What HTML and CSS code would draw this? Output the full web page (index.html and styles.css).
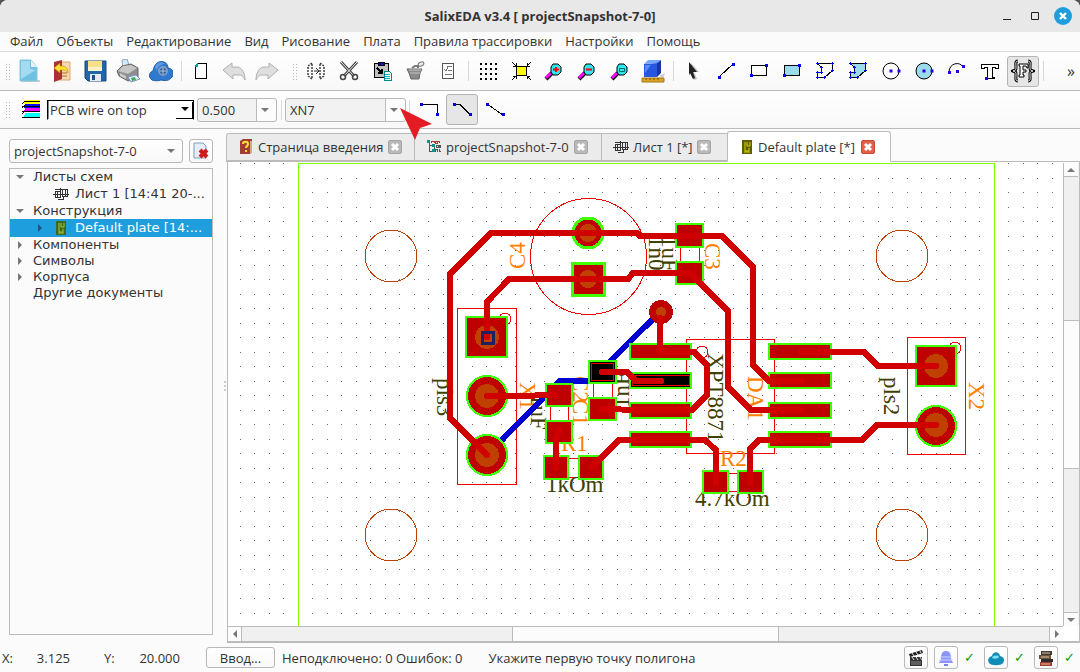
FILE: index.html
```html
<!DOCTYPE html>
<html lang="ru">
<head>
    <meta charset="UTF-8">
    <meta name="viewport" content="width=device-width, initial-scale=1.0">
    <title>SalixEDA v3.4</title>
    <link rel="stylesheet" href="styles.css">
</head>
<body>
<!-- shared symbols -->
<svg class="defs" width="0" height="0" aria-hidden="true">
    <symbol id="sheet" viewBox="0 0 16 14">
        <path d="M0 7.500h16M2.500 4.500h5v6h-5zM9.500 2.500h5v7h-5zM4.500 4v7M12.500 3v7M7.500 1v3M5 12.500h5.500V10M2 2.500h7" fill="none" stroke="#333" shape-rendering="crispEdges"/>
    </symbol>
    <symbol id="zoomglass" viewBox="0 0 24 24">
        <path d="M10 14l-6 6" stroke="#000" stroke-width="4"/>
        <path d="M9 14l-5 5" stroke="#f0f" stroke-width="3"/>
        <path d="M11 5h5l3 3v5l-3 3h-5l-2-3V8z" fill="#2ee6ee" stroke="#000"/>
    </symbol>
    <symbol id="x" viewBox="0 0 14 14">
        <path d="M4 4l6 6M10 4l-6 6" stroke="#fff" stroke-width="3"/>
    </symbol>
</svg>

<div class="app">
    <header class="titlebar">
        <span class="title">SalixEDA v3.4 [ projectSnapshot-7-0]</span>
        <div class="window-buttons">
            <button aria-label="Minimize"><svg width="10" height="10"><path d="M1 8.500h8" stroke="#222"/></svg></button>
            <button aria-label="Maximize"><svg width="10" height="10"><path d="M1.500 1.500h7v7h-7z" fill="none" stroke="#222"/></svg></button>
            <button class="close" aria-label="Close"><svg width="18" height="18"><path d="M6 6l6 6M12 6l-6 6" stroke="#fff" stroke-width="2.400"/></svg></button>
        </div>
    </header>

    <nav class="menubar">
        <button>Файл</button>
        <button>Объекты</button>
        <button>Редактирование</button>
        <button>Вид</button>
        <button>Рисование</button>
        <button>Плата</button>
        <button>Правила трассировки</button>
        <button>Настройки</button>
        <button>Помощь</button>
    </nav>

    <div class="toolbar">
        <span class="grip"></span>
        <button aria-label="New"><svg viewBox="0 0 24 24"><path d="M5 21h18v2H5z" fill="#ccc"/><path d="M3 1h11l6 7v14H3z" fill="#6fc0e2" stroke="#8ac6df"/><path d="M4 2h9v8l6 1-15 9z" fill="#a5dbef"/><path d="M14 1v7h6z" fill="#e4f5fb"/></svg></button>
        <button aria-label="Open"><svg viewBox="0 0 24 24"><path d="M8 3h12v18H8z" fill="#f6d9b0" stroke="#d9a873"/><path d="M11 14h6M11 17h6" stroke="#d8a060" stroke-width="2"/><path d="M4 3l8-2v19l-8 3z" fill="#a83232"/><path d="M4 9l6-5v3c5 0 8 1 8 7-2-3-4-3-8-3v3z" fill="#ffe02e" stroke="#b98a10" stroke-width=".6"/></svg></button>
        <button aria-label="Save"><svg viewBox="0 0 24 24"><path d="M2 2h21v20H5l-3-3z" fill="#2465a6" stroke="#17497c"/><path d="M5 2h14v10H5z" fill="#fbe08a"/><path d="M5 8h14v4H5z" fill="#fff2c4"/><path d="M7 15h11v7H7z" fill="#e6eaee"/><path d="M9 16h3v5H9z" fill="#23507e"/></svg></button>
        <button aria-label="Print"><svg viewBox="0 0 24 24"><path d="M6 1l5-1 3 9-7 3z" fill="#d4e8f8" stroke="#8fa8bd"/><path d="M1 12l5-5 9-2 7 4v9l-10 4-9-5z" fill="#8e8e8e" stroke="#666"/><path d="M2 12l5-5 8-1 6 3-9 6z" fill="#c6c6c6"/><path d="M4 14l6 3v3l-6-3z" fill="#ccc"/><path d="M12 18l8-2 4 4-9 3z" fill="#e8eef8" stroke="#7996c8"/><path d="M15 19l4-1 1 3-4 1z" fill="#3eae55"/></svg></button>
        <button aria-label="Cloud"><svg viewBox="0 0 24 24"><path d="M3 21c-4-3-3-8 1-9C5 5 10 1 15 3c3 1 4 4 4 6 6 1 6 6 4 9-3 4-7 4-11 3-3 1-6 1-9 0z" fill="#2f79cf" stroke="#1d5ca8"/><path d="M6 8c2-5 7-6 10-3-4 0-7 2-8 7z" fill="#5d9ce4"/><circle cx="14" cy="12" r="4" fill="#285a9b" stroke="#7d9cc4" stroke-width="2"/><path d="M14 9v6M11 12h6" stroke="#b4c6da"/></svg></button>
        <span class="sep"></span>
        <button aria-label="Page"><svg viewBox="0 0 24 24" class="crisp"><path d="M9.500 4.500h8v15h-11v-12z" fill="#fff" stroke="#000"/><path d="M6 8V6l3-2v4z" fill="#0a9c94"/></svg></button>
        <button aria-label="Undo"><svg viewBox="0 0 24 24"><path d="M1 11l9-7v4h6c4 1 7 6 7 13-2-4-4-5-6-5h-6v4z" fill="#dedede" stroke="#b0b0b0"/></svg></button>
        <button aria-label="Redo"><svg viewBox="0 0 24 24"><path d="M23 11l-9-7v4H8c-4 1-7 6-7 13 2-4 4-5 6-5h6v4z" fill="#dedede" stroke="#b0b0b0"/></svg></button>
        <span class="grip wide"></span>
        <button aria-label="Mirror"><svg viewBox="0 0 24 24"><path d="M8 4L4 7v10l4 3zM16 4l4 3v10l-4 3z" fill="#fff" stroke="#444" stroke-width="1.500" stroke-dasharray="2 1"/><path d="M10 12h5M12 9l3 3-3 3" fill="none" stroke="#333"/></svg></button>
        <button aria-label="Cut"><svg viewBox="0 0 24 24"><path d="M20 3L7 17M4 3l13 14" stroke="#444" stroke-width="3"/><path d="M20 3L7 17M4 3l13 14" stroke="#eee"/><circle cx="6" cy="18" r="2.500" fill="none" stroke="#444" stroke-width="1.500"/><circle cx="18" cy="18" r="2.500" fill="none" stroke="#444" stroke-width="1.500"/></svg></button>
        <button aria-label="Paste"><svg viewBox="0 0 24 24" class="crisp"><path d="M4 4h14v14H4z" fill="#c0c0c0" stroke="#000"/><path d="M8 3h6v3H8z" fill="#11a" stroke="#000"/><path d="M7 9l5 5M12 10v4H8" fill="none" stroke="#000" stroke-width="2"/><path d="M14 12h5l2 2v7h-7z" fill="#fff" stroke="#088"/><path d="M15 15h5M15 17h5M15 19h5" stroke="#0bb"/></svg></button>
        <button aria-label="Trash"><svg viewBox="0 0 24 24"><path d="M4 10h15l-2 4-1 6H8l-2-6z" fill="#8b8b8b" stroke="#666"/><path d="M6 11h12M7 14h10" stroke="#c5c5c5"/><path d="M9 9l3-2h3v2" fill="none" stroke="#777" stroke-width="2"/><ellipse cx="18" cy="5" rx="3" ry="2" fill="#eee" stroke="#777" transform="rotate(-25 18 5)"/></svg></button>
        <button aria-label="Properties"><svg viewBox="0 0 24 24" class="crisp"><path d="M6.500 4.500h11v15h-11z" fill="#fff" stroke="#555"/><path d="M11 7.500h5M12 11.500h4M9 15.500h7" stroke="#777"/><path d="M8 10l2 2 2-4" fill="none" stroke="#777"/></svg></button>
        <span class="sep"></span>
        <button aria-label="Grid"><svg viewBox="0 0 24 24" class="crisp"><path d="M4 5h18M4 10h18M4 15h18M4 20h18" stroke="#000" stroke-width="2" stroke-dasharray="2 3"/></svg></button>
        <button aria-label="Fit"><svg viewBox="0 0 24 24" class="crisp"><path d="M7.500 7.500h10v9h-10z" fill="#ff0" stroke="#000"/><path d="M3 3l4 4M7 4v3H4M22 3l-4 4M18 4v3h3M3 21l4-4M7 20v-3H4M22 21l-4-4M18 20v-3h3" fill="none" stroke="#000"/></svg></button>
        <button aria-label="Zoom in"><svg><use href="#zoomglass"/><path d="M11 10.500h6M14 8v5" stroke="#f00" stroke-width="2"/></svg></button>
        <button aria-label="Zoom out"><svg><use href="#zoomglass"/><path d="M11 10.500h6" stroke="#f00" stroke-width="2"/></svg></button>
        <button aria-label="Zoom window"><svg><use href="#zoomglass"/><path d="M11.500 9.500h5v3h-5z" fill="none" stroke="#066"/></svg></button>
        <button aria-label="3D view"><svg viewBox="0 0 24 24"><path d="M18 17l6-3-2 5z" fill="#ccc"/><path d="M3 5l13-1v14H3z" fill="#2557e0"/><path d="M3 5l4-4h13l-4 3z" fill="#77a6ff"/><path d="M16 4l4-3v13l-4 4z" fill="#1637a5"/><path d="M4 6h6L4 14z" fill="#5c8bf8"/><path d="M1 19h22v4H1z" fill="#d9a229" stroke="#a87812"/><path d="M5 19v2M9 19v2M13 19v2M17 19v2" stroke="#7c5609"/></svg></button>
        <span class="sep"></span>
        <button aria-label="Select"><svg viewBox="0 0 24 24"><path d="M10 4l8 9h-5l3 7-3 1-3-7-2 3z" fill="#888" opacity=".5"/><path d="M8 3l8 10h-4l2 6-2 1-3-6-1 2z" fill="#222"/></svg></button>
        <button aria-label="Line"><svg viewBox="0 0 24 24" class="crisp"><path d="M5 18L19 5" stroke="#000"/><path d="M4 17h3v3H4zM18 4h3v3h-3z" fill="#00f"/></svg></button>
        <button aria-label="Rectangle"><svg viewBox="0 0 24 24" class="crisp"><path d="M4.500 6.500h15v10h-15z" fill="none" stroke="#000"/><path d="M3 15h3v3H3zM18 5h3v3h-3z" fill="#00f"/></svg></button>
        <button aria-label="Filled rectangle"><svg viewBox="0 0 24 24" class="crisp"><path d="M4.500 6.500h15v10h-15z" fill="#9bdcec" stroke="#000"/><path d="M3 15h3v3H3zM18 5h3v3h-3z" fill="#00f"/></svg></button>
        <button aria-label="Polygon"><svg viewBox="0 0 24 24" class="crisp"><path d="M4.500 4.500h15v7l-8 7h-7v-5h4v-5z" fill="none" stroke="#000"/><path d="M3 4h3v1H3zM4 3h1v3H4zM18 4h3v1h-3zM19 3h1v3h-1zM18 11h3v1h-3zM19 10h1v3h-1zM10 18h3v1h-3zM11 17h1v3h-1zM3 18h3v1H3zM4 17h1v3H4zM3 13h3v1H3zM4 12h1v3H4zM7 13h3v1H7zM8 12h1v3H8zM7 8h3v1H7zM8 7h1v3H8z" fill="#00f"/></svg></button>
        <button aria-label="Filled polygon"><svg viewBox="0 0 24 24" class="crisp"><path d="M4.500 4.500h15v7l-8 7h-7v-5h4v-5z" fill="#9bdcec" stroke="#000"/><path d="M3 4h3v1H3zM4 3h1v3H4zM18 4h3v1h-3zM19 3h1v3h-1zM18 11h3v1h-3zM19 10h1v3h-1zM10 18h3v1h-3zM11 17h1v3h-1zM3 18h3v1H3zM4 17h1v3H4zM3 13h3v1H3zM4 12h1v3H4zM7 13h3v1H7zM8 12h1v3H8zM7 8h3v1H7zM8 7h1v3H8z" fill="#00f"/></svg></button>
        <button aria-label="Circle"><svg viewBox="0 0 24 24"><circle cx="12" cy="12" r="8" fill="none" stroke="#000"/><path d="M10.500 10.500h3v3h-3zM18.500 10.500h3v3h-3z" fill="#20e"/></svg></button>
        <button aria-label="Filled circle"><svg viewBox="0 0 24 24"><circle cx="12" cy="12" r="8" fill="#9bdcec" stroke="#000"/><path d="M10.500 10.500h3v3h-3zM18.500 10.500h3v3h-3z" fill="#20e"/></svg></button>
        <button aria-label="Arc"><svg viewBox="0 0 24 24"><path d="M4 13c0-9 11-11 14-5" fill="none" stroke="#000"/><path d="M3 12h3v3H3zM11 11h3v3h-3zM17 6h3v3h-3z" fill="#20e"/></svg></button>
        <button aria-label="Text"><svg viewBox="0 0 24 24" class="crisp"><path d="M3.500 5.500h17v4h-3v-1h-3v10h2v1h-8v-1h1v-10h-3v1h-3z" fill="#fff" stroke="#000"/><path d="M7 18h3v3H7z" fill="#20e"/></svg></button>
        <button class="checked" aria-label="Text fragment"><svg viewBox="0 0 24 24"><path d="M7 2C4 2 5 5 5 8s0 3-3 4c3 1 3 1 3 4s-1 6 2 6M17 2c3 0 2 3 2 6s0 3 3 4c-3 1-3 1-3 4s1 6-2 6" fill="none" stroke="#000" stroke-width="3"/><path d="M7 2C4 2 5 5 5 8s0 3-3 4c3 1 3 1 3 4s-1 6 2 6M17 2c3 0 2 3 2 6s0 3 3 4c-3 1-3 1-3 4s1 6-2 6" fill="none" stroke="#eee"/><path d="M8 5h9v4h-1l-1-2h-3v4h3v2h-3v3h1v2H8v-2h1V7H8z" fill="#fff" stroke="#000"/></svg></button>
        <span class="sep"></span>
        <button class="more" aria-label="More">»</button>
    </div>

    <div class="toolbar second">
        <span class="grip"></span>
        <button aria-label="Layers"><svg viewBox="0 0 24 24" class="crisp"><path d="M8 2h15v4H7z" fill="#ff0"/><path d="M8 6h15v4H7z" fill="#00f"/><path d="M8 10h15v4H7z" fill="#f0f"/><path d="M8 15h15v4H7z" fill="#0ff"/><path d="M7 3h16M5 8h18M5 13h18M5 19h18M5 6l3-3M5 10l3-3M5 16l3-3" stroke="#000"/></svg></button>
        <span class="layer"><select aria-label="Layer"><option>PCB wire on top</option></select></span>
        <span class="combo width"><select aria-label="Width"><option>0.500</option></select></span>
        <span class="sep"></span>
        <span class="combo net"><select aria-label="Net"><option>XN7</option></select></span>
        <span class="sep"></span>
        <button class="joint" aria-label="Right angle"><svg viewBox="0 0 24 24" class="crisp"><path d="M4 6.500h16.500V17" fill="none" stroke="#000"/><path d="M3 5h3v3H3zM19 15h3v3h-3z" fill="#00d"/></svg></button>
        <button class="joint checked" aria-label="45 degrees"><svg viewBox="0 0 24 24" class="crisp"><path d="M4 6.500h6l10 10" fill="none" stroke="#000"/><path d="M3 5h3v3H3zM19 15h3v3h-3z" fill="#00d"/></svg></button>
        <button class="joint" aria-label="Straight"><svg viewBox="0 0 24 24" class="crisp"><path d="M4 6l16 11" fill="none" stroke="#000"/><path d="M3 5h3v3H3zM19 15h3v3h-3z" fill="#00d"/></svg></button>
        <svg class="pointer" width="32" height="32"><path d="M0 0l32 16-12 4-5 12z" fill="#e31b23"/></svg>
    </div>

    <main class="workspace">
        <aside class="sidebar">
            <div class="project">
                <span class="combo plain"><select aria-label="Project"><option>projectSnapshot-7-0</option></select></span>
                <button aria-label="Close project"><svg width="18" height="18"><path d="M2 1h9l3 3v12H2z" fill="#e3eef8" stroke="#7f9cba"/><path d="M8 8l7 7M15 8l-7 7" stroke="#d01c1c" stroke-width="4"/></svg></button>
            </div>
            <ul class="tree">
                <li><i class="open"></i>Листы схем</li>
                <li class="child"><svg width="16" height="14"><use href="#sheet"/></svg><span>Лист 1 [14:41 20-...</span></li>
                <li><i class="open"></i>Конструкция</li>
                <li class="child selected"><i class="shut"></i><svg width="10" height="14"><path d="M0 0h10v14H0z" fill="#3d6a1e"/><path d="M3 2v9h4V8M5 2v4h3V2M2 12h6" fill="none" stroke="#a5c63c"/></svg><span>Default plate [14:...</span></li>
                <li><i class="shut"></i>Компоненты</li>
                <li><i class="shut"></i>Символы</li>
                <li><i class="shut"></i>Корпуса</li>
                <li><i></i>Другие документы</li>
            </ul>
        </aside>
        <div class="splitter"></div>

        <section class="editor">
            <div class="tabs">
                <div class="tab intro">
                    <svg width="14" height="16"><path d="M1 2l3-2h9v13l-2 2H1z" fill="#a13d36"/><path d="M11 2h2v11l-2 2z" fill="#d8a68e"/><path d="M4 5c0-3 5-3 5 0 0 2-2 2-2 4M7 11v2" fill="none" stroke="#ffe22e" stroke-width="2"/></svg>
                    <span>Страница введения</span>
                    <button aria-label="Close tab"><svg width="14" height="14"><use href="#x"/></svg></button>
                </div>
                <div class="tab snapshot">
                    <svg width="14" height="14" class="crisp"><path d="M2 1v10h4M2 5h4M7 5v6" fill="none" stroke="#555"/><path d="M0 0h3v3H0zM5 4h3v3H5zM5 9h3v3H5z" fill="#1a8b8b"/><path d="M4 3V1h3v2M8 3V1h2v2H8M11 1h2M12 1v2" fill="none" stroke="#b33"/><path d="M9 5h2v2H9zM12 5l2 3M14 5l-2 3M8 12l1-3h1v3M12 9v3M14 9v3M12 11h2" fill="none" stroke="#555"/></svg>
                    <span>projectSnapshot-7-0</span>
                    <button aria-label="Close tab"><svg width="14" height="14"><use href="#x"/></svg></button>
                </div>
                <div class="tab list">
                    <svg width="16" height="14"><use href="#sheet"/></svg>
                    <span>Лист 1 [*]</span>
                    <button aria-label="Close tab"><svg width="14" height="14"><use href="#x"/></svg></button>
                </div>
                <div class="tab plate active">
                    <svg width="10" height="14"><path d="M0 0h10v14H0z" fill="#5d5d00"/><path d="M3 2v9h4V8M5 2v4h3V2M2 12h6" fill="none" stroke="#d8d800"/></svg>
                    <span>Default plate [*]</span>
                    <button aria-label="Close tab"><svg width="14" height="14"><use href="#x"/></svg></button>
                </div>
            </div>
            <div class="view">
                <svg class="board">
                    <defs>
                        <pattern id="grid" x="240" y="178" width="29" height="29" patternUnits="userSpaceOnUse">
                            <path d="M0 0h1v1H0zM14 0h1v1h-1zM0 14h1v1H0zM14 14h1v1h-1z" fill="#666"/>
                        </pattern>
                    </defs>
                    <g transform="translate(-228 -163)" class="crisp">
                        <rect x="228" y="163" width="3000" height="2000" fill="url(#grid)"/>
                        <path class="edge" d="M298 163h697v1200h-1V164H299v1199h-1z"/>
                        <g class="hole">
                            <circle cx="391" cy="256" r="26"/>
                            <circle cx="902" cy="256" r="26"/>
                            <circle cx="391" cy="535" r="26"/>
                            <circle cx="902" cy="535" r="26"/>
                        </g>
                        <!-- outlines of the parts -->
                        <g class="outline">
                            <circle cx="588.500" cy="256.500" r="58"/>
                            <path d="M457.500 308.500h59v176h-59zM686.500 339.500h88v114h-88zM907.500 337.500h58v117h-58z"/>
                            <circle cx="505" cy="319" r="6"/>
                            <circle cx="702" cy="352" r="6"/>
                            <circle cx="955" cy="348" r="6"/>
                            <path d="M680.500 247v15M699.500 247v15M550.500 405v17M568.500 405v17M593.500 383v15M612.500 383v15M569 458.500h9M569 477.500h9M729 473.500h8M729 491.500h8"/>
                        </g>
                        <!-- part names and values -->
                        <g class="name">
                            <text transform="translate(525 269) rotate(-90)">C4</text>
                            <text transform="translate(705 243) rotate(90)">C3</text>
                            <text transform="translate(520 382) rotate(90)">X1</text>
                            <text transform="translate(573 376) rotate(90)">C2</text>
                            <text transform="translate(573 399) rotate(90)">C1</text>
                            <text transform="translate(748 376) rotate(90)">DA1</text>
                            <text transform="translate(969 382) rotate(90)">X2</text>
                            <text x="561" y="451">R1</text>
                            <text x="720" y="466">R2</text>
                        </g>
                        <g class="value">
                            <text transform="translate(437 378) rotate(90)">pls3</text>
                            <text transform="translate(884 377) rotate(90)">pls2</text>
                            <text transform="translate(531 394) rotate(90)">1uF</text>
                            <text transform="translate(629 408) rotate(-90)">1nF</text>
                            <text transform="translate(649 236) rotate(90)">1n0</text>
                            <text transform="translate(662 236) rotate(90)">1uF</text>
                            <text transform="translate(708 353) rotate(90)">XPT8871</text>
                            <text x="546" y="492">1kOm</text>
                            <text x="695" y="506">4.7kOm</text>
                        </g>
                        <path class="wire bottom" d="M487 455L560 381H590L660 312"/>
                        <!-- pads -->
                        <g class="pad">
                            <circle cx="588" cy="233" r="15" class="wide"/>
                            <rect x="572" y="263" width="32" height="32" class="wide"/>
                            <rect x="676" y="224" width="27" height="23"/>
                            <rect x="676" y="262" width="27" height="22"/>
                            <rect x="466" y="317" width="41" height="40"/>
                            <circle cx="487" cy="396" r="20"/>
                            <circle cx="487" cy="455" r="20"/>
                            <rect x="546" y="384" width="26" height="22"/>
                            <rect x="546" y="421" width="26" height="22"/>
                            <rect x="589" y="361" width="27" height="22" class="lit"/>
                            <rect x="589" y="398" width="27" height="22"/>
                            <rect x="544" y="456" width="24" height="23"/>
                            <rect x="579" y="456" width="24" height="23"/>
                            <rect x="630" y="344" width="61" height="15"/>
                            <rect x="630" y="373" width="61" height="15" class="lit"/>
                            <rect x="630" y="403" width="61" height="15"/>
                            <rect x="630" y="432" width="61" height="15"/>
                            <rect x="769" y="344" width="62" height="15"/>
                            <rect x="769" y="373" width="62" height="15"/>
                            <rect x="769" y="403" width="62" height="15"/>
                            <rect x="769" y="432" width="62" height="15"/>
                            <rect x="703" y="471" width="25" height="22"/>
                            <rect x="738" y="471" width="25" height="22"/>
                            <rect x="916" y="346" width="40" height="40"/>
                            <circle cx="936" cy="426" r="20"/>
                        </g>
                        <path class="outline" d="M591.500 363.500h22v17h-22zM632.500 375.500h57v10h-57z"/>
                        <circle cx="661" cy="312" r="12" fill="#bf0000"/>
                        <g fill="#bf4000">
                            <circle cx="588" cy="233" r="9"/>
                            <circle cx="588" cy="279" r="9"/>
                            <circle cx="661" cy="312" r="5"/>
                            <circle cx="487" cy="337" r="12"/>
                            <circle cx="487" cy="396" r="12"/>
                            <circle cx="487" cy="455" r="12"/>
                            <circle cx="936" cy="366" r="12"/>
                            <circle cx="936" cy="425" r="12"/>
                        </g>
                        <path class="wire" d="M487 455L450 418V274L491 233H637L640 236H722L753 267V365L769 381H801"/>
                        <path class="wire" d="M487 337V302L509 279H628L633 273H690L728 311V387L751 410H801"/>
                        <path class="wire" d="M660 318V352H694L707 365V395L692 410H640L602 409"/>
                        <path class="wire" d="M602 372H627L636 381H661"/>
                        <path class="wire" d="M487 396H516L555 395"/>
                        <path class="wire" d="M559 430L556 440V468"/>
                        <path class="wire" d="M592 467L619 440H705L716 450V483"/>
                        <path class="wire" d="M750 483V449L759 440H862L877 425H936"/>
                        <path class="wire" d="M801 352H864L878 366H936"/>
                        <rect x="482" y="332" width="11" height="11" fill="none" stroke="#202060" stroke-width="3"/>
                    </g>
                </svg>
                <div class="scrollbar vertical"><i class="up"></i><span></span><i class="down"></i></div>
                <div class="scrollbar horizontal"><i class="left"></i><span></span><i class="right"></i></div>
            </div>
        </section>
    </main>

    <footer class="statusbar">
        <span class="axis">X:</span><span class="coord">3.125</span>
        <span class="axis">Y:</span><span class="coord">20.000</span>
        <button class="enter">Ввод...</button>
        <span class="errors">Неподключено: 0 Ошибок: 0</span>
        <span class="hint">Укажите первую точку полигона</span>
        <div class="services">
            <button aria-label="Video"><svg width="18" height="18"><path d="M3 8h12v9H3z" fill="#333"/><path d="M2 5l13-4 1 3L3 8z" fill="#222"/><path d="M5 4l2 3M9 3l2 3M13 2l1 2M5 8l2 3M9 8l2 3M13 8l2 3" stroke="#ddd"/><path d="M4 13h10M4 15h10" stroke="#888"/></svg></button>
            <button aria-label="Notifications"><svg width="18" height="18"><path d="M9 2c4 0 5 3 5 8l2 4H2l2-4c0-5 1-8 5-8z" fill="#8b93ff"/><path d="M2 11h14M3 8h12" stroke="#d2d5ff"/><path d="M7 15h4v2H7z" fill="#777fe8"/></svg></button>
            <span class="ok">✓</span>
            <button aria-label="Cloud state"><svg width="18" height="18"><path d="M2 14c-2-4 0-6 3-7 1-5 7-5 8 0 4 1 5 4 3 7-2 3-12 3-14 0z" fill="#0f8db5"/><path d="M5 9c1-3 6-3 7-1-1 2-5 2-7 1z" fill="#7be0f5"/></svg></button>
            <span class="ok">✓</span>
            <button aria-label="Library"><svg width="18" height="18"><path d="M4 2h11v4H4z" fill="#3d3a35"/><path d="M2 6h12v4H2z" fill="#6e5138"/><path d="M4 10h12v3H4z" fill="#2b2b2b"/><path d="M3 13h12v4H3z" fill="#a33a2a"/><path d="M5 4h8M4 8h8M4 15h9" stroke="#d8c8a8"/></svg></button>
            <span class="ok">✓</span>
        </div>
    </footer>
</div>
</body>
</html>
```
FILE: styles.css
```css
* {
    box-sizing: border-box;
}
body {
    margin: 0;
    background: #555;
    color: #333;
    font-family: "Open Sans", "Noto Sans", sans-serif;
    font-size: 13px;
}
button, select {
    font: inherit;
    color: inherit;
    margin: 0;
}
button {
    padding: 0;
    border: 0;
    background: none;
    display: flex;
    align-items: center;
    justify-content: center;
}
svg {
    display: block;
    flex: none;
}
.defs {
    position: absolute;
}
.crisp {
    shape-rendering: crispEdges;
}
.app {
    display: flex;
    flex-direction: column;
    height: 100vh;
    min-height: 480px;
    background: #fbfbfb;
    border-radius: 8px 8px 0 0;
    overflow: hidden;
}

/* title and menu */
.titlebar {
    display: grid;
    grid-template-columns: 1fr auto 1fr;
    align-items: center;
    height: 32px;
    flex: none;
    background: #e8e8e8;
    color: #333;
}
.title {
    grid-column: 2;
    font-weight: bold;
}
.window-buttons {
    display: flex;
    justify-content: flex-end;
    align-items: center;
    gap: 18px;
    padding-right: 8px;
}
.window-buttons .close {
    border-radius: 50%;
    background: #1f9ede;
    margin-left: -4px;
}
.menubar {
    display: flex;
    height: 20px;
    flex: none;
    padding-left: 3px;
    border-bottom: 1px solid #d9d9d9;
}
.menubar button {
    padding: 0 6px 2px 7px;
}

/* toolbars */
.toolbar {
    display: flex;
    align-items: center;
    height: 39px;
    flex: none;
    background: linear-gradient(#fff, #f8f8f8);
    border-bottom: 1px solid #bbb;
    position: relative;
}
.second {
    height: 38px;
}
.toolbar button {
    width: 32px;
    height: 31px;
    margin-right: 1px;
    flex: none;
    border-radius: 3px;
}
.toolbar button svg {
    width: 24px;
    height: 24px;
}
.toolbar .checked {
    background: #e6e6e6;
    border: 1px solid #b4b4b4;
}
.grip {
    flex: none;
    width: 5px;
    height: 17px;
    margin: 0 3px 0 5px;
    background: radial-gradient(circle, #bbb 1px, transparent 1px) 0 0 / 3px 3px;
}
.grip.wide {
    margin-left: 8px;
}
.sep {
    flex: none;
    width: 1px;
    height: 20px;
    margin: 0 3px;
    background: #d8d8d8;
}
.toolbar .more {
    margin-left: auto;
    width: 16px;
    font-size: 16px;
}
.layer, .combo {
    position: relative;
    display: flex;
}
.layer select, .combo select {
    appearance: none;
    width: 100%;
    padding: 0 4px;
    outline: none;
}
.layer {
    width: 147px;
    margin: 0 3px 0 1px;
}
.layer select {
    height: 20px;
    padding: 0 2px;
    border: 1px solid #fff;
    border-top-color: #000;
    border-left-color: #000;
    border-right-color: #000;
    background: #fff;
    box-shadow: inset 1px 0 #888;
}
.layer::after, .combo::after, .tree i::after, .scrollbar i::after {
    content: "";
    border: 4px solid transparent;
    border-bottom-width: 0;
    border-top-color: #777;
}
.layer::after {
    position: absolute;
    right: 5px;
    top: 7px;
    border-top-color: #000;
}
.layer::before {
    content: "";
    position: absolute;
    right: 1px;
    top: 2px;
    width: 16px;
    height: 16px;
    border-right: 1px solid #000;
    border-bottom: 1px solid #000;
    pointer-events: none;
}
.combo select {
    height: 24px;
    border: 1px solid #b8b8b8;
    border-radius: 3px;
    background: linear-gradient(90deg, #f2f2f2 calc(100% - 20px), #bbb calc(100% - 20px), #bbb calc(100% - 19px), #fcfcfc calc(100% - 19px));
}
.combo::after {
    position: absolute;
    right: 8px;
    top: 10px;
}
.width {
    width: 80px;
    margin-right: 1px;
}
.net {
    width: 121px;
}
.pointer {
    position: absolute;
    left: 400px;
    top: 17px;
    z-index: 2;
}

/* project tree */
.workspace {
    flex: 1;
    min-height: 0;
    display: flex;
}
.sidebar {
    width: 213px;
    flex: none;
    padding: 10px 0 8px 9px;
    display: flex;
    flex-direction: column;
    gap: 5px;
}
.project {
    display: flex;
    gap: 6px;
}
.project .combo {
    flex: 1;
}
.combo.plain select, .project button, .enter, .services button {
    background: linear-gradient(#fff, #f8f8f8);
    border: 1px solid #b8b8b8;
    border-radius: 3px;
}
.project button {
    width: 24px;
    height: 24px;
}
.tree {
    flex: 1;
    margin: 0;
    padding: 0;
    list-style: none;
    border: 1px solid #bbb;
    font-family: "DejaVu Sans", sans-serif;
}
.tree li {
    display: flex;
    align-items: center;
    height: 16px;
    padding: 0 0 1px 6px;
    white-space: nowrap;
}
.tree .child {
    height: 18px;
    padding-left: 43px;
    gap: 6px;
}
.tree i {
    width: 17px;
    display: flex;
}
.tree i::after {
    border-top-color: transparent;
}
.tree .open::after {
    border-top-color: #777;
}
.tree .shut::after {
    border: 4px solid transparent;
    border-right-width: 0;
    border-left-color: #777;
    margin-left: 2px;
}
.tree .selected {
    background: #1f9ede;
    color: #fff;
    padding-left: 26px;
    gap: 0;
}
.tree .selected i {
    width: 20px;
    flex: none;
}
.tree .selected i::after {
    border-left-color: #14577a;
}
.tree .selected span {
    margin-left: 9px;
}
.splitter {
    width: 13px;
    flex: none;
    background: radial-gradient(circle, #ccc 1px, transparent 1px) 10px 50% / 4px 4px repeat-y;
    background-clip: content-box;
    padding: 250px 0;
}

/* tabs */
.editor {
    flex: 1;
    min-width: 0;
    display: flex;
    flex-direction: column;
}
.tabs {
    display: flex;
    align-items: flex-end;
    height: 33px;
    flex: none;
    position: relative;
    border-bottom: 1px solid #bbb;
}
.tab {
    display: flex;
    align-items: center;
    height: 28px;
    padding-left: 12px;
    gap: 5px;
    background: #ebebeb;
    border: 1px solid #bbb;
    border-right: 0;
    white-space: nowrap;
}
.tab:first-child {
    border-top-left-radius: 3px;
}
.tab button {
    margin-left: auto;
    border-radius: 2px;
    background: #b9b9b9;
    border: 1px solid #a5a5a5;
    width: 14px;
    height: 14px;
    flex: none;
}
.intro {
    width: 188px;
    padding-right: 16px;
}
.snapshot {
    width: 187px;
    padding-right: 16px;
}
.list {
    width: 126px;
    padding-right: 16px;
    padding-left: 11px;
    gap: 4px;
}
.plate {
    width: 164px;
    padding-right: 15px;
}
.tab.active {
    height: 31px;
    padding-left: 14px;
    gap: 6px;
    background: #fff;
    border: 1px solid #bbb;
    border-bottom-color: #fff;
    border-radius: 3px 3px 0 0;
    margin-bottom: -1px;
}
.active button {
    background: #e0604a;
    border-color: #c74634;
}

/* board view */
.view {
    flex: 1;
    min-height: 0;
    display: grid;
    grid-template-columns: 1fr 16px;
    grid-template-rows: 1fr 15px;
    margin-left: 1px;
    border: 1px solid #bbb;
    border-top: 0;
    border-bottom-width: 2px;
    padding-top: 1px;
    background: #fff;
}
.board {
    width: 100%;
    height: 100%;
    overflow: hidden;
}
.edge {
    fill: #80ff00;
}
.hole {
    fill: none;
    stroke: #bf4000;
}
.outline {
    fill: none;
    stroke: #f00000;
}
.name, .value {
    font-family: "Liberation Serif", serif;
    font-size: 23px;
    fill: #ff8000;
}
.value {
    fill: #404000;
}
.wire {
    fill: none;
    stroke: #d00000;
    stroke-width: 6;
    stroke-linecap: round;
    stroke-linejoin: round;
}
.bottom {
    stroke: #0000d0;
}
.pad {
    fill: #bf0000;
    stroke: #40ff00;
    stroke-width: 2;
}
.pad .wide {
    stroke-width: 3;
}
.lit {
    fill: #000;
}
.scrollbar {
    display: flex;
    background: #f0f0f0;
}
.scrollbar i {
    flex: none;
    width: 14px;
    height: 14px;
    background: #fcfcfc;
    display: flex;
    align-items: center;
    justify-content: center;
}
.vertical {
    flex-direction: column;
    border-left: 1px solid #bbb;
}
.vertical span {
    height: 32%;
    margin: auto 0;
    background: #fcfcfc;
    border: solid #bbb;
    border-width: 1px 0;
}
.horizontal {
    border-top: 1px solid #bbb;
}
.horizontal span {
    width: 32%;
    margin: 0 auto;
    background: #fcfcfc;
    border: solid #bbb;
    border-width: 0 1px;
}
.scrollbar .up::after {
    transform: rotate(180deg);
}
.scrollbar .left::after {
    transform: rotate(90deg);
}
.scrollbar .right::after {
    transform: rotate(-90deg);
}
.left {
    border-right: 1px solid #bbb;
}
.right {
    border-left: 1px solid #bbb;
}
.up {
    border-bottom: 1px solid #bbb;
}
.down {
    border-top: 1px solid #bbb;
}

/* status bar */
.statusbar {
    display: flex;
    align-items: center;
    height: 29px;
    flex: none;
    padding-left: 2px;
    white-space: nowrap;
}
.axis {
    width: 14px;
}
.coord {
    width: 54px;
    margin-right: 34px;
    text-align: right;
}
.coord + .axis {
    width: 22px;
}
.enter {
    width: 69px;
    height: 21px;
    margin: 0 7px 0 -8px;
}
.hint {
    margin-left: 26px;
}
.services {
    display: flex;
    align-items: center;
    margin-left: auto;
}
.services button {
    width: 24px;
    height: 23px;
}
.services button + button {
    margin-left: 6px;
}
.ok {
    width: 26px;
    padding-left: 6px;
    color: #0a9a0a;
    font-family: "DejaVu Sans", sans-serif;
}
.ok:last-child {
    width: 22px;
}
```
